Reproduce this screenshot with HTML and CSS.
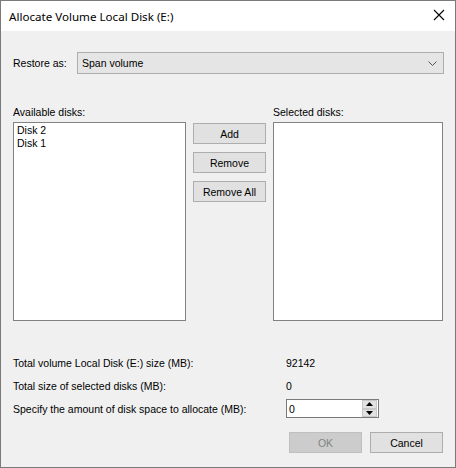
FILE: index.html
```html
<!DOCTYPE html>
<html>
<head>
<meta charset="utf-8">
<link rel="stylesheet" href="styles.css">
</head>
<body>
<div class="dialog">
  <div class="titlebar">
    <span class="title">Allocate Volume Local Disk (E:)</span>
    <svg class="close" width="12" height="12" viewBox="0 0 12 12"><path d="M1 1 L11 11 M11 1 L1 11" stroke="#000" stroke-width="1.1" fill="none"/></svg>
  </div>
  <div class="content">
    <div class="restore-row">
      <span class="restore-label">Restore as:</span>
      <div class="combo">
        <span>Span volume</span>
        <svg class="chev" width="9" height="6" viewBox="0 0 9 6"><path d="M0.5 0.5 L4.5 4.5 L8.5 0.5" stroke="#555" stroke-width="1" fill="none"/></svg>
      </div>
    </div>
    <div class="lists">
      <div class="col col-avail">
        <div class="col-label">Available disks:</div>
        <div class="listbox">
          <div class="item">Disk 2</div>
          <div class="item">Disk 1</div>
        </div>
      </div>
      <div class="mid-buttons">
        <div class="btn">Add</div>
        <div class="btn">Remove</div>
        <div class="btn">Remove All</div>
      </div>
      <div class="col col-sel">
        <div class="col-label">Selected disks:</div>
        <div class="listbox"></div>
      </div>
    </div>
    <div class="info">
      <div class="info-row"><span class="info-label">Total volume Local Disk (E:) size (MB):</span><span class="info-val">92142</span></div>
      <div class="info-row"><span class="info-label">Total size of selected disks (MB):</span><span class="info-val">0</span></div>
      <div class="info-row spin-row"><span class="info-label">Specify the amount of disk space to allocate (MB):</span>
        <div class="spin">
          <span class="spin-text">0</span>
          <div class="spin-btns">
            <div class="spin-b"><svg width="7" height="4" viewBox="0 0 7 4"><path d="M3.5 0 L7 4 L0 4 Z" fill="#000"/></svg></div>
            <div class="spin-b"><svg width="7" height="4" viewBox="0 0 7 4"><path d="M0 0 L7 0 L3.5 4 Z" fill="#000"/></svg></div>
          </div>
        </div>
      </div>
    </div>
    <div class="footer">
      <div class="btn btn-disabled">OK</div>
      <div class="btn">Cancel</div>
    </div>
  </div>
</div>
</body>
</html>
```
FILE: styles.css
```css
html, body { margin: 0; padding: 0; }
body {
  width: 456px; height: 468px; overflow: hidden;
  font-family: "Liberation Sans", Arial, sans-serif;
  font-size: 10.5px; color: #000;
}
.dialog {
  width: 456px; height: 468px; box-sizing: border-box;
  border: 1px solid #7a7a7a;
  display: flex; flex-direction: column;
  background: #f0f0f0;
}
.titlebar {
  height: 30px; background: #fff;
  display: flex; align-items: center; justify-content: space-between;
  padding: 0 10px 0 8px; flex: none;
}
.title { font-family: "Noto Sans", "Open Sans", sans-serif; font-size: 11.6px; }
.close { margin-top: -2px; }
.content {
  flex: 1; padding: 21px 11px 0 12px;
  display: flex; flex-direction: column;
}
.restore-row { display: flex; align-items: center; height: 22px; }
.restore-label { width: 64px; }
.combo {
  flex: 1; height: 22px; box-sizing: border-box;
  border: 1px solid #adadad; background: #e5e5e5;
  display: flex; align-items: center; justify-content: space-between;
  padding: 0 6px 0 4px;
}
.chev { margin-top: 1px; }
.lists { display: flex; margin-top: 32px; gap: 7px; }
.col { display: flex; flex-direction: column; }
.col-avail { width: 173px; }
.col-sel { width: 170px; }
.col-label { height: 16px; line-height: 13px; }
.listbox {
  height: 199px; box-sizing: border-box;
  border: 1px solid #828282; background: #fff;
  padding: 1px 3px;
}
.item { line-height: 13px; }
.mid-buttons {
  width: 73px; padding-top: 17px;
  display: flex; flex-direction: column; gap: 8px;
}
.btn {
  width: 73px; height: 21px; box-sizing: border-box;
  border: 1px solid #adadad; background: #e1e1e1;
  display: flex; align-items: center; justify-content: center;
}
.btn-disabled { background: #cccccc; border-color: #bfbfbf; color: #838383; }
.info { margin-top: 30px; display: flex; flex-direction: column; }
.info-row { display: flex; align-items: center; height: 23px; }
.info-label { width: 273px; }
.spin {
  width: 93px; height: 19px; box-sizing: border-box;
  border: 1px solid #7a7a7a; background: #fff;
  display: flex; align-items: center; justify-content: space-between;
  padding-left: 2px;
}
.spin-btns { width: 15px; height: 17px; display: flex; flex-direction: column; margin-right: 1px; }
.spin-b {
  flex: 1; background: #e1e1e1; box-sizing: border-box; border: 1px solid #c8c8c8;
  display: flex; align-items: center; justify-content: center;
}
.footer { display: flex; justify-content: flex-end; gap: 8px; margin-top: 12px; padding-right: 1px; }
```
